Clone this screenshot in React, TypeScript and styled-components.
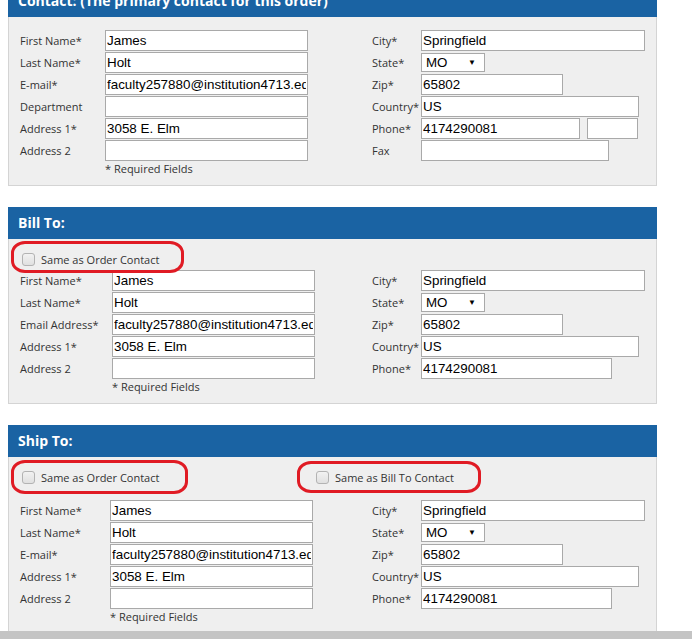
import { createGlobalStyle, styled } from "styled-components";

const GlobalStyle = createGlobalStyle`
  body {
    margin: 0;
    background: #ffffff;
    font-family: "Open Sans", "Noto Sans", sans-serif;
    overflow: hidden;
  }
`;

const Page = styled.div`
  width: 649px;
  margin: -15px 0 0 8px;
`;

const Section = styled.section`
  margin-bottom: 21px;
`;

const Header = styled.div`
  height: 32px;
  line-height: 32px;
  padding-left: 10px;
  background: #1a63a3;
  color: #ffffff;
  font-weight: 700;
  font-size: 14px;
  white-space: nowrap;
  overflow: hidden;
`;

const Panel = styled.div<{ $top: number }>`
  background: #efefef;
  border: 1px solid #d4d4d4;
  border-top: none;
  padding: ${(p) => p.$top}px 11px 10px 11px;
`;

const Body = styled.div`
  display: grid;
  grid-template-columns: 352px 1fr;
  align-items: start;
`;

const FieldGrid = styled.div<{ $label: number }>`
  display: grid;
  grid-template-columns: ${(p) => p.$label}px auto;
  align-items: start;
`;

const Label = styled.div`
  height: 21px;
  line-height: 21px;
  margin-bottom: 1px;
  font-size: 11px;
  color: #333333;
  white-space: nowrap;
`;

const Input = styled.input<{ $w: number }>`
  box-sizing: border-box;
  width: ${(p) => p.$w}px;
  height: 21px;
  margin: 0 0 1px 0;
  padding: 0 1px;
  border: 1px solid #a9a9a9;
  background: #ffffff;
  font-family: "Liberation Sans", Arial, sans-serif;
  font-size: 13.4px;
  color: #000000;
  outline: none;
`;

const Inline = styled.div`
  display: flex;
  gap: 7px;
`;

const Select = styled.div`
  box-sizing: border-box;
  width: 64px;
  height: 19px;
  margin: 1px 0 2px 0;
  padding: 0 8px 0 4px;
  display: flex;
  align-items: center;
  justify-content: space-between;
  border: 1px solid #a9a9a9;
  background: #ffffff;
  font-family: "Liberation Sans", Arial, sans-serif;
  font-size: 13.33px;
  color: #000000;
`;

const Arrow = styled.span`
  font-size: 8px;
  line-height: 1;
`;

const Note = styled.div`
  grid-column: 2;
  height: 13px;
  line-height: 13px;
  font-size: 11px;
  color: #333333;
`;

const CheckRow = styled.div<{ $after: number }>`
  display: grid;
  grid-template-columns: 294px auto;
  height: 20px;
  align-items: center;
  margin-bottom: ${(p) => p.$after}px;
`;

const CheckLabel = styled.label`
  position: relative;
  display: inline-flex;
  align-items: center;
  gap: 6px;
  margin-left: 2px;
  font-size: 11px;
  color: #333333;
  white-space: nowrap;
`;

const Box = styled.span`
  box-sizing: border-box;
  width: 13px;
  height: 13px;
  border: 1px solid #b3b3b3;
  border-radius: 3px;
  background: linear-gradient(#f2f2f2, #e0e0e0);
`;

const Annotation = styled.span`
  position: absolute;
  box-sizing: border-box;
  border: 3px solid #e01b24;
  border-radius: 14px / 12px;
  pointer-events: none;
`;

const BottomBar = styled.div`
  position: fixed;
  left: 0;
  right: 0;
  bottom: 0;
  height: 8px;
  background: #c4c4c4;
`;

type Field = { label: string; value?: string; w?: number; kind?: "select" | "phone" };

type Mark = { left: number; top: number; width: number; height: number };

const email = "faculty257880@institution4713.edu";

function Fields({ rows, label, note }: { rows: Field[]; label: number; note?: boolean }) {
  return (
    <FieldGrid $label={label}>
      {rows.map((r) => (
        <FieldCell key={r.label} field={r} />
      ))}
      {note && <Note>* Required Fields</Note>}
    </FieldGrid>
  );
}

function FieldCell({ field }: { field: Field }) {
  let control;
  if (field.kind === "select") {
    control = (
      <Select>
        <span>MO</span>
        <Arrow>▼</Arrow>
      </Select>
    );
  } else if (field.kind === "phone") {
    control = (
      <Inline>
        <Input $w={field.w ?? 159} defaultValue={field.value} readOnly />
        <Input $w={51} defaultValue="" readOnly />
      </Inline>
    );
  } else {
    control = <Input $w={field.w ?? 203} defaultValue={field.value ?? ""} readOnly />;
  }
  return (
    <>
      <Label>{field.label}</Label>
      {control}
    </>
  );
}

function Check({ text, mark }: { text: string; mark: Mark }) {
  return (
    <CheckLabel>
      <Box />
      {text}
      <Annotation
        style={{ left: mark.left, top: mark.top, width: mark.width, height: mark.height }}
      />
    </CheckLabel>
  );
}

const contactLeft: Field[] = [
  { label: "First Name*", value: "James" },
  { label: "Last Name*", value: "Holt" },
  { label: "E-mail*", value: email },
  { label: "Department", value: "" },
  { label: "Address 1*", value: "3058 E. Elm" },
  { label: "Address 2", value: "" },
];

const contactRight: Field[] = [
  { label: "City*", value: "Springfield", w: 224 },
  { label: "State*", kind: "select" },
  { label: "Zip*", value: "65802", w: 142 },
  { label: "Country*", value: "US", w: 218 },
  { label: "Phone*", value: "4174290081", w: 159, kind: "phone" },
  { label: "Fax", value: "", w: 188 },
];

const addressRight: Field[] = [
  { label: "City*", value: "Springfield", w: 224 },
  { label: "State*", kind: "select" },
  { label: "Zip*", value: "65802", w: 142 },
  { label: "Country*", value: "US", w: 218 },
  { label: "Phone*", value: "4174290081", w: 191 },
];

const addressLeft = (emailLabel: string): Field[] => [
  { label: "First Name*", value: "James" },
  { label: "Last Name*", value: "Holt" },
  { label: emailLabel, value: email },
  { label: "Address 1*", value: "3058 E. Elm" },
  { label: "Address 2", value: "" },
];

export default function App() {
  return (
    <>
      <GlobalStyle />
      <Page>
        <Section>
          <Header>Contact: (The primary contact for this order)</Header>
          <Panel $top={13}>
            <Body>
              <Fields rows={contactLeft} label={85} note />
              <Fields rows={contactRight} label={49} />
            </Body>
          </Panel>
        </Section>

        <Section>
          <Header>Bill To:</Header>
          <Panel $top={10}>
            <CheckRow $after={1}>
              <Check text="Same as Order Contact" mark={{ left: -11, top: -11, width: 173, height: 32 }} />
            </CheckRow>
            <Body>
              <Fields rows={addressLeft("Email Address*")} label={92} note />
              <Fields rows={addressRight} label={49} />
            </Body>
          </Panel>
        </Section>

        <Section>
          <Header>Ship To:</Header>
          <Panel $top={10}>
            <CheckRow $after={13}>
              <Check text="Same as Order Contact" mark={{ left: -11, top: -10, width: 177, height: 34 }} />
              <Check text="Same as Bill To Contact" mark={{ left: -19, top: -9, width: 184, height: 32 }} />
            </CheckRow>
            <Body>
              <Fields rows={addressLeft("E-mail*")} label={90} note />
              <Fields rows={addressRight} label={49} />
            </Body>
          </Panel>
        </Section>
      </Page>
      <BottomBar />
    </>
  );
}
